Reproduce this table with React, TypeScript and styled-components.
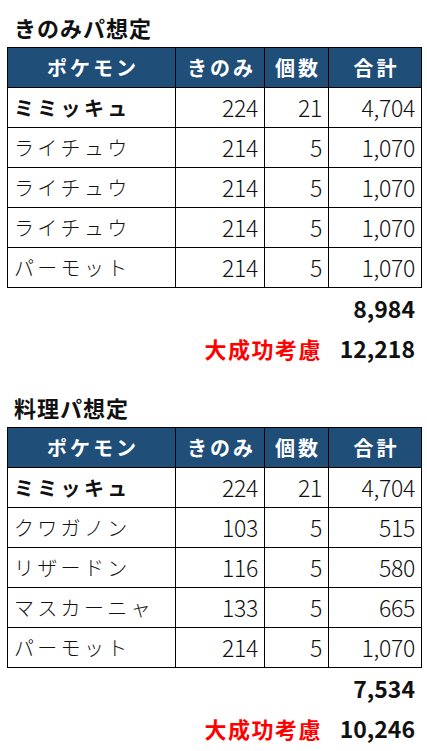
import React from "react";
import styled, { createGlobalStyle } from "styled-components";

const GlobalStyle = createGlobalStyle`
  html, body { margin: 0; padding: 0; background: #ffffff; }
  body { font-family: "Noto Sans CJK JP", "Noto Sans", sans-serif; color: #111; }
`;

const Page = styled.div`
  width: 427px;
  display: flex;
  flex-direction: column;
  gap: 12px;
`;

const Section = styled.section`
  display: flex;
  flex-direction: column;
`;

const Title = styled.h2`
  margin: 0;
  height: 47px;
  padding: 14px 0 0 14px;
  box-sizing: border-box;
  font-size: 22px;
  line-height: 26px;
  font-weight: 700;
  letter-spacing: 1px;
  color: #111;
`;

const Table = styled.table`
  margin-left: 7px;
  width: 414px;
  border-collapse: collapse;
  table-layout: fixed;
`;

const Row = styled.tr`
  height: 40px;
`;

const HeadCell = styled.th`
  background: #1f4e79;
  color: #ffffff;
  border: 1px solid #000;
  font-size: 20px;
  font-weight: 700;
  letter-spacing: 3px;
  text-indent: 3px;
  line-height: 1;
  padding: 0;
  text-align: center;
  vertical-align: middle;
`;

const NameCell = styled.td<{ $bold?: boolean }>`
  border: 1px solid #000;
  font-size: 20px;
  font-weight: ${(p) => (p.$bold ? 700 : 300)};
  color: #111;
  letter-spacing: 3.3px;
  line-height: 1;
  padding: 0 0 0 6px;
  text-align: left;
  vertical-align: middle;
  white-space: nowrap;
`;

const NumCell = styled.td`
  border: 1px solid #000;
  font-size: 23px;
  font-weight: 300;
  color: #111;
  letter-spacing: -0.3px;
  line-height: 1;
  padding: 0 6px 0 0;
  text-align: right;
  vertical-align: middle;
`;

const Summary = styled.div`
  display: grid;
  grid-template-columns: 1fr 93px;
  margin-left: 7px;
  width: 414px;
`;

const SummaryLabel = styled.div`
  height: 40px;
  display: flex;
  align-items: center;
  justify-content: flex-end;
  padding-right: 6px;
  font-size: 22px;
  font-weight: 700;
  color: #ff0000;
  letter-spacing: 1.5px;
`;

const SummaryValue = styled.div`
  height: 40px;
  display: flex;
  align-items: center;
  justify-content: flex-end;
  padding-right: 6px;
  font-size: 23px;
  font-weight: 700;
  color: #111;
  letter-spacing: 0px;
`;

type Item = { name: string; berry: number; count: number; total: string; bold?: boolean };

type Plan = { title: string; items: Item[]; sum: string; great: string };

const plans: Plan[] = [
  {
    title: "きのみパ想定",
    items: [
      { name: "ミミッキュ", berry: 224, count: 21, total: "4,704", bold: true },
      { name: "ライチュウ", berry: 214, count: 5, total: "1,070" },
      { name: "ライチュウ", berry: 214, count: 5, total: "1,070" },
      { name: "ライチュウ", berry: 214, count: 5, total: "1,070" },
      { name: "パーモット", berry: 214, count: 5, total: "1,070" },
    ],
    sum: "8,984",
    great: "12,218",
  },
  {
    title: "料理パ想定",
    items: [
      { name: "ミミッキュ", berry: 224, count: 21, total: "4,704", bold: true },
      { name: "クワガノン", berry: 103, count: 5, total: "515" },
      { name: "リザードン", berry: 116, count: 5, total: "580" },
      { name: "マスカーニャ", berry: 133, count: 5, total: "665" },
      { name: "パーモット", berry: 214, count: 5, total: "1,070" },
    ],
    sum: "7,534",
    great: "10,246",
  },
];

function PlanSection({ plan }: { plan: Plan }) {
  return (
    <Section>
      <Title>{plan.title}</Title>
      <Table>
        <colgroup>
          <col style={{ width: 168 }} />
          <col style={{ width: 89 }} />
          <col style={{ width: 64 }} />
          <col style={{ width: 93 }} />
        </colgroup>
        <thead>
          <Row>
            <HeadCell>ポケモン</HeadCell>
            <HeadCell>きのみ</HeadCell>
            <HeadCell>個数</HeadCell>
            <HeadCell>合計</HeadCell>
          </Row>
        </thead>
        <tbody>
          {plan.items.map((it, i) => (
            <Row key={i}>
              <NameCell $bold={it.bold}>{it.name}</NameCell>
              <NumCell>{it.berry}</NumCell>
              <NumCell>{it.count}</NumCell>
              <NumCell>{it.total}</NumCell>
            </Row>
          ))}
        </tbody>
      </Table>
      <Summary>
        <SummaryLabel />
        <SummaryValue>{plan.sum}</SummaryValue>
        <SummaryLabel>大成功考慮</SummaryLabel>
        <SummaryValue>{plan.great}</SummaryValue>
      </Summary>
    </Section>
  );
}

export default function App() {
  return (
    <>
      <GlobalStyle />
      <Page>
        {plans.map((p) => (
          <PlanSection key={p.title} plan={p} />
        ))}
      </Page>
    </>
  );
}
